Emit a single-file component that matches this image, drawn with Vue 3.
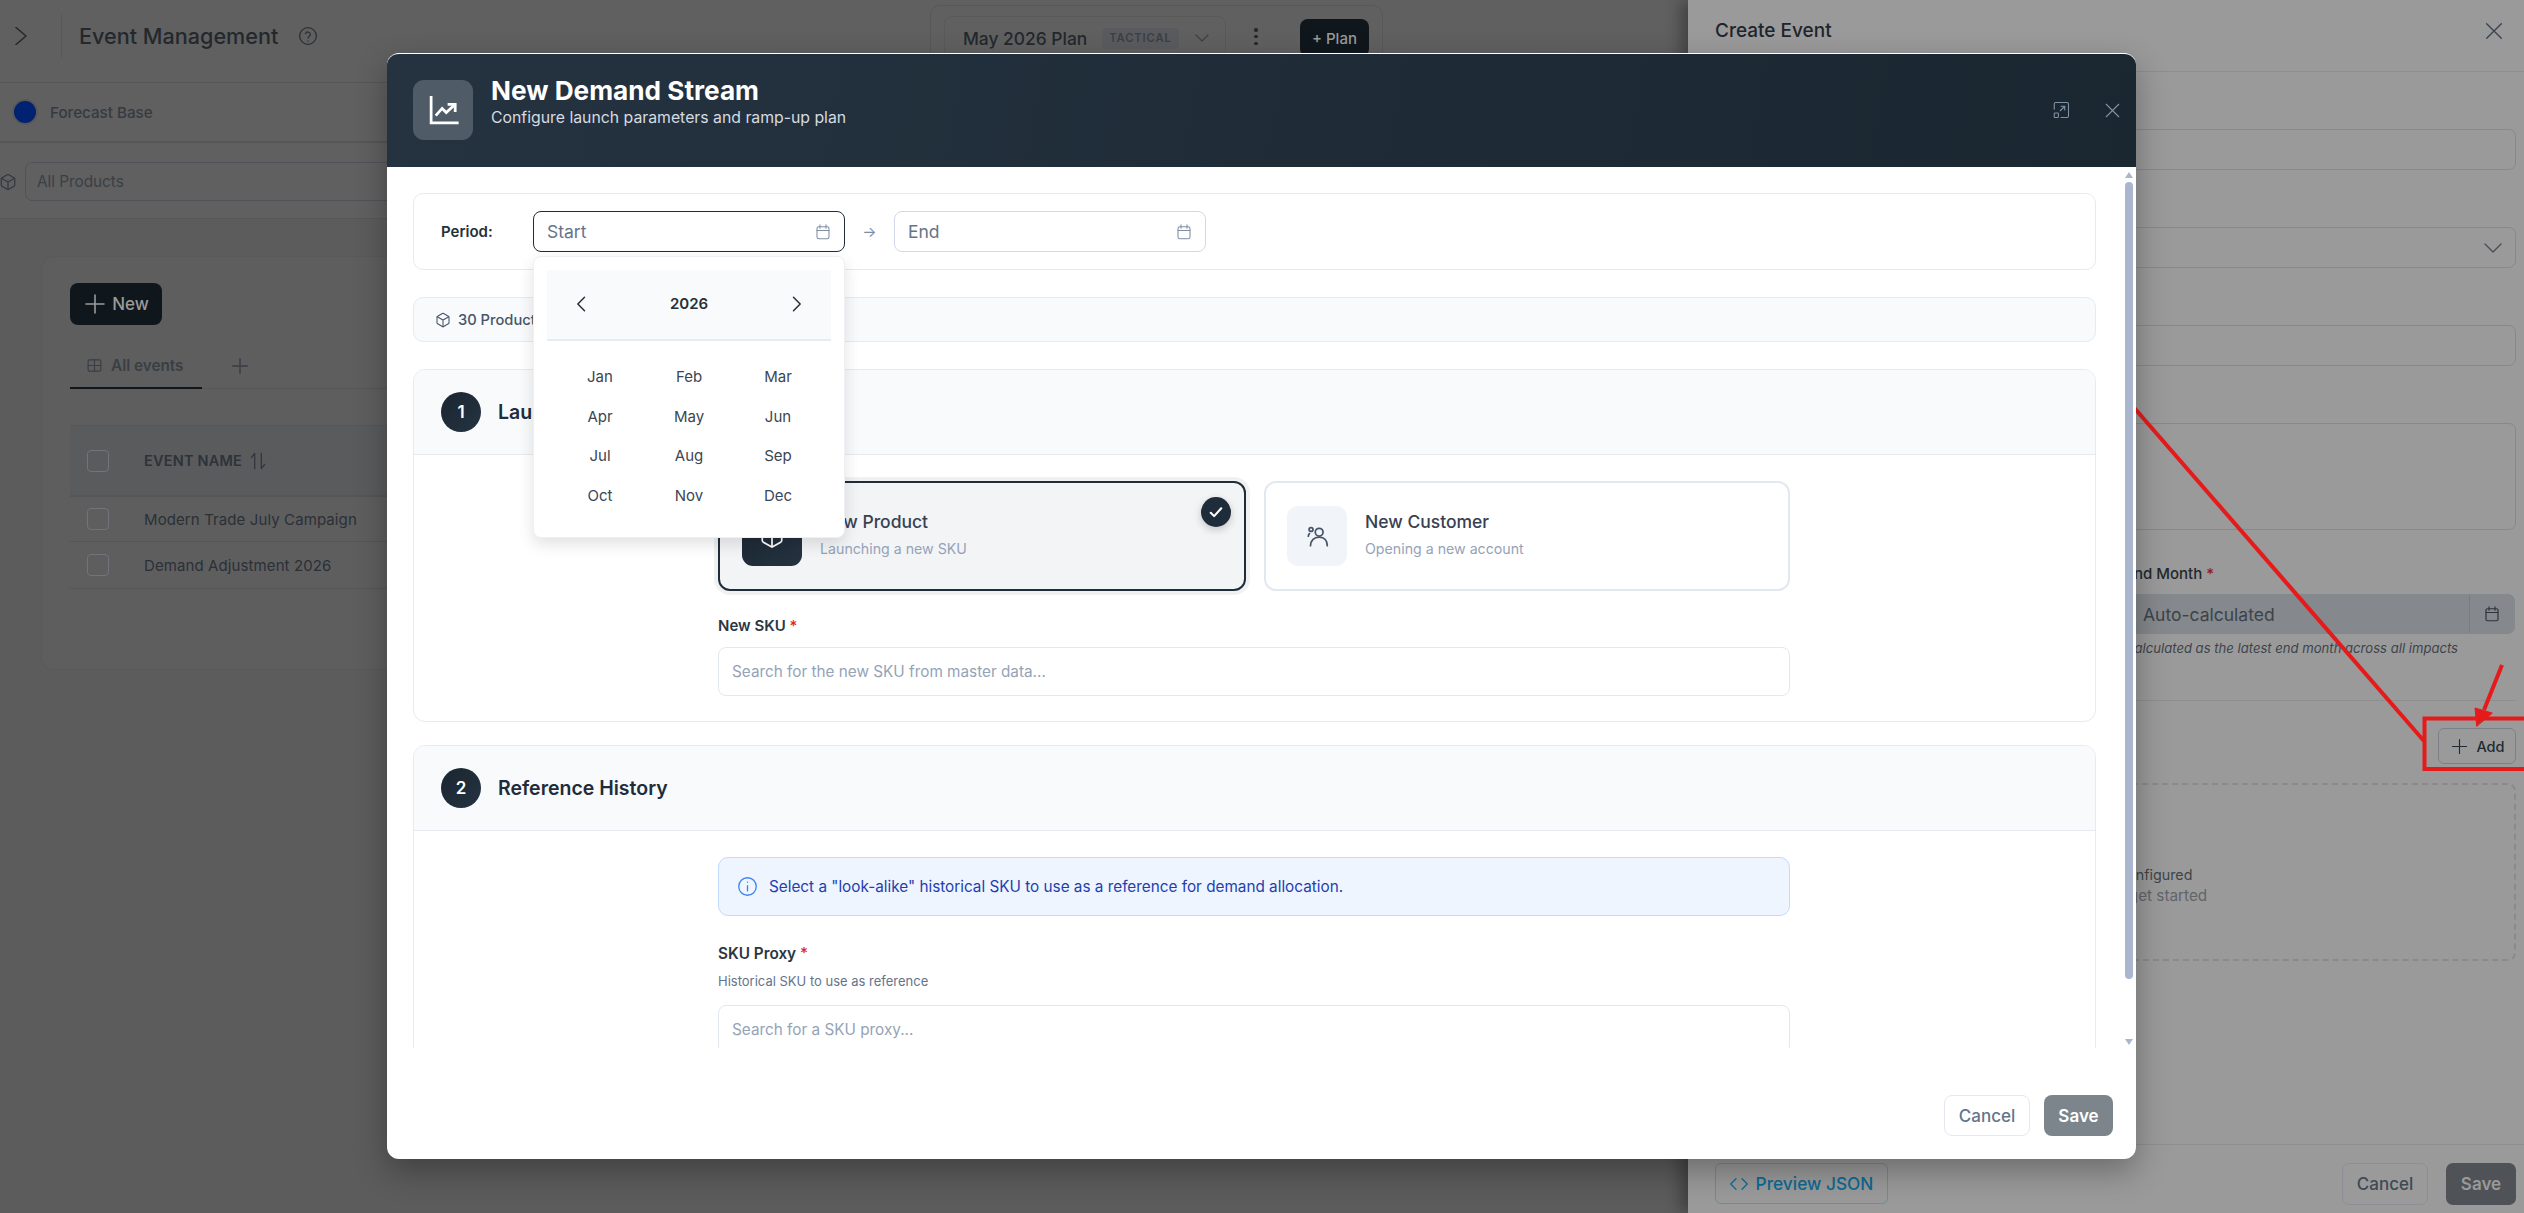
<script setup>
const months = ['Jan','Feb','Mar','Apr','May','Jun','Jul','Aug','Sep','Oct','Nov','Dec']
</script>

<template>
  <div class="app">
    <div class="page">
      <main class="main">
        <header class="topbar">
          <div class="top-left">
            <svg class="i-chev" viewBox="0 0 12 18"><path d="M1 .5L11 9 1 17.500"/></svg>
            <span class="top-div"></span>
            <h1>Event Management</h1>
            <svg class="i-help" viewBox="0 0 24 24"><circle cx="12" cy="12" r="10"/><path d="M9 9.2a3 3 0 0 1 5.800 1c0 2-2.800 2.400-2.800 4.300"/><path d="M12 17.800v.2"/></svg>
          </div>
          <div class="plan-wrap">
            <div class="plan-box">
              <span class="plan-name">May 2026 Plan</span>
              <span class="plan-badge">TACTICAL</span>
              <svg class="i-plan-chev" viewBox="0 0 24 24"><path d="M4 8l8 8 8-8"/></svg>
            </div>
            <span class="kebab"><i></i><i></i><i></i></span>
            <button class="plan-btn">+ Plan</button>
          </div>
        </header>
        <div class="row-base"><span class="dot"></span><span>Forecast Base</span></div>
        <div class="row-filter">
          <svg class="i-box" viewBox="0 0 24 24"><path d="M21 8a2 2 0 0 0-1-1.700l-7-4a2 2 0 0 0-2 0l-7 4A2 2 0 0 0 3 8v8a2 2 0 0 0 1 1.700l7 4a2 2 0 0 0 2 0l7-4a2 2 0 0 0 1-1.700z"/><path d="M3.300 7L12 12l8.700-5M12 22V12"/></svg>
          <div class="filter-input">All Products</div>
        </div>
        <section class="card">
          <button class="new-btn"><svg viewBox="0 0 24 24"><path d="M12 3v18M3 12h18"/></svg>New</button>
          <div class="tabs">
            <div class="tab">
              <svg class="i-table" viewBox="0 0 24 24"><rect x="3" y="4" width="18" height="16" rx="2"/><path d="M3 12h18M12 4v16"/></svg>
              All events
            </div>
            <svg class="i-tabplus" viewBox="0 0 24 24"><path d="M12 4v16M4 12h16"/></svg>
          </div>
          <div class="thead">
            <span class="check"></span>
            <span class="th">EVENT NAME</span>
            <svg class="i-sort" viewBox="0 0 24 24"><path d="M8 21V3L4 8M16 3v18l4-5"/></svg>
          </div>
          <div class="tr tr-1"><span class="check"></span><span>Modern Trade July Campaign</span></div>
          <div class="tr tr-2"><span class="check"></span><span>Demand Adjustment 2026</span></div>
        </section>
      </main>

      <aside class="drawer">
        <header class="dr-head">
          <span>Create Event</span>
          <svg viewBox="0 0 24 24"><path d="M4 4l16 16M20 4L4 20"/></svg>
        </header>
        <div class="dr-body">
          <div class="dr-field f1"><label>Event Name</label><div class="dr-input"></div></div>
          <div class="dr-field f2"><label>Event Type</label>
            <div class="dr-input select"><svg viewBox="0 0 24 24"><path d="M4 8l8 8 8-8"/></svg></div>
          </div>
          <div class="dr-field f3"><label>Owner</label><div class="dr-input"></div></div>
          <div class="dr-field f4"><label>Description</label><div class="dr-input area"></div></div>
          <div class="dr-months">
            <div class="dr-col"><label>Start Month <b>*</b></label><div class="dr-input"></div></div>
            <div class="dr-col">
              <label>End Month <b>*</b></label>
              <div class="dr-input auto">
                <span>Auto-calculated</span>
                <span class="addon"><svg viewBox="0 0 24 24"><rect x="4" y="5" width="16" height="16" rx="2"/><path d="M4 10h16M8 2.500V7M16 2.500V7"/></svg></span>
              </div>
              <p class="hint-it">Calculated as the latest end month across all impacts</p>
            </div>
          </div>
          <div class="dr-impacts">
            <div class="imp-head">
              <span>Impacts</span>
              <button class="add-btn"><svg viewBox="0 0 24 24"><path d="M12 4v16M4 12h16"/></svg>Add</button>
            </div>
            <div class="empty">
              <span class="e1">No impacts configured</span>
              <span class="e2">Click "Add" to get started</span>
            </div>
          </div>
        </div>
        <footer class="dr-foot">
          <button class="json-btn"><svg viewBox="0 0 24 24"><path d="M8 5l-7 7 7 7M16 5l7 7-7 7"/></svg>Preview JSON</button>
          <div class="dr-actions">
            <button class="dr-cancel">Cancel</button>
            <button class="dr-save">Save</button>
          </div>
        </footer>
      </aside>
    </div>

    <svg class="marks" viewBox="0 0 2524 1213">
      <path class="mark-line" d="M2130 403L2424 741"/>
      <path class="mark-line" d="M2502 665L2484 710"/>
      <polygon class="mark-head" points="2476.700,726 2475,708 2492,713"/>
      <rect class="mark-box" x="2424.500" y="718.500" width="102" height="50.500"/>
    </svg>

    <div class="modal">
      <header class="m-head">
        <div class="m-icon">
          <svg viewBox="0 0 24 24"><path d="M3 2.500V21h19"/><path d="M7 15l4-4.500 3 3L20 8"/><path d="M16 7.500h4.500V12"/></svg>
        </div>
        <div class="m-titles">
          <h2>New Demand Stream</h2>
          <p>Configure launch parameters and ramp-up plan</p>
        </div>
        <div class="m-tools">
          <svg class="i-expand" viewBox="0 0 24 24"><path d="M3 11V4a2 2 0 0 1 2-2h15a2 2 0 0 1 2 2v16a2 2 0 0 1-2 2h-8"/><rect x="3" y="16" width="5.500" height="6" rx="1"/><path d="M11 13l6-6M12 7h5v5"/></svg>
          <svg class="i-x" viewBox="0 0 24 24"><path d="M2 2l20 20M22 2L2 22"/></svg>
        </div>
      </header>

      <div class="m-body">
        <div class="period">
          <span class="period-label">Period:</span>
          <div class="date active">
            <span>Start</span>
            <svg viewBox="0 0 24 24"><rect x="4" y="5" width="16" height="16" rx="2.500"/><path d="M4 10h16M8 2.500V7M16 2.500V7"/></svg>
            <div class="popup">
              <div class="pop-head">
                <svg viewBox="0 0 24 24"><path d="M15 4l-8 8 8 8"/></svg>
                <span>2026</span>
                <svg viewBox="0 0 24 24"><path d="M9 4l8 8-8 8"/></svg>
              </div>
              <div class="pop-grid">
                <span v-for="m in months" :key="m">{{ m }}</span>
              </div>
            </div>
          </div>
          <span class="arrow">→</span>
          <div class="date">
            <span>End</span>
            <svg viewBox="0 0 24 24"><rect x="4" y="5" width="16" height="16" rx="2.500"/><path d="M4 10h16M8 2.500V7M16 2.500V7"/></svg>
          </div>
        </div>

        <div class="count">
          <svg viewBox="0 0 24 24"><path d="M21 8a2 2 0 0 0-1-1.700l-7-4a2 2 0 0 0-2 0l-7 4A2 2 0 0 0 3 8v8a2 2 0 0 0 1 1.700l7 4a2 2 0 0 0 2 0l7-4a2 2 0 0 0 1-1.700z"/><path d="M3.300 7L12 12l8.700-5M12 22V12"/></svg>
          <span>30 Products</span>
        </div>

        <section class="sec sec-1">
          <div class="sec-head"><span class="num">1</span><h3>Launch Type</h3></div>
          <div class="sec-body">
            <div class="choices">
              <div class="choice on">
                <div class="c-icon dark">
                  <svg viewBox="0 0 24 24"><path d="M21 8a2 2 0 0 0-1-1.700l-7-4a2 2 0 0 0-2 0l-7 4A2 2 0 0 0 3 8v8a2 2 0 0 0 1 1.700l7 4a2 2 0 0 0 2 0l7-4a2 2 0 0 0 1-1.700z"/><path d="M3.300 7L12 12l8.700-5M12 22V12"/></svg>
                </div>
                <div class="c-text"><strong>New Product</strong><small>Launching a new SKU</small></div>
                <span class="tick"><svg viewBox="0 0 24 24"><path d="M5 13l4.500 4.500L19 7"/></svg></span>
              </div>
              <div class="choice">
                <div class="c-icon">
                  <svg viewBox="0 0 24 24"><circle cx="14" cy="8.500" r="3.600"/><circle cx="6.500" cy="6" r="1.800"/><path d="M5 9.800c-.8.800-1 1.600-1 2.400M6 21c0-4.600 3-8 8-8s7.500 3.400 7.500 8"/></svg>
                </div>
                <div class="c-text"><strong>New Customer</strong><small>Opening a new account</small></div>
              </div>
            </div>
            <label class="f-label sku-label">New SKU <b>*</b></label>
            <div class="f-input">Search for the new SKU from master data...</div>
          </div>
        </section>

        <section class="sec sec-2">
          <div class="sec-head"><span class="num">2</span><h3>Reference History</h3></div>
          <div class="sec-body">
            <div class="info">
              <svg viewBox="0 0 24 24"><circle cx="12" cy="12" r="10"/><path d="M12 11v6M12 7v.2"/></svg>
              <span>Select a "look-alike" historical SKU to use as a reference for demand allocation.</span>
            </div>
            <label class="f-label proxy-label">SKU Proxy <b>*</b></label>
            <p class="f-hint">Historical SKU to use as reference</p>
            <div class="f-input">Search for a SKU proxy...</div>
          </div>
        </section>
        <div class="sb-up"></div>
        <div class="sb-thumb"></div>
        <div class="sb-down"></div>
      </div>

      <footer class="m-foot">
        <button class="m-cancel">Cancel</button>
        <button class="m-save">Save</button>
      </footer>
    </div>
  </div>
</template>

<style>
html, body { margin: 0; background: #5c5c5c; }
</style>

<style scoped>
* { box-sizing: border-box; }
svg { fill: none; stroke: currentColor; stroke-width: 1.600; stroke-linecap: round; stroke-linejoin: round; display: block; flex: none; }
button { font-family: inherit; }
h1, h2, h3, p { margin: 0; }
label { display: block; }
b { color: #8f2020; font-weight: 500; }

.app { position: relative; width: 2524px; height: 1213px; overflow: hidden; font-family: Inter, "Liberation Sans", sans-serif; }
.page { display: flex; width: 100%; height: 100%; }

/* underlying page */
.main { width: 1688px; height: 100%; background: #5c5c5c; color: #23282d; }
.topbar { height: 83px; background: #606060; border-bottom: 1px solid #565656; display: flex; }
.top-left { width: 930px; display: flex; align-items: center; padding-left: 15px; height: 72px; }
.i-chev { width: 12px; height: 18px; stroke-width: 1.500; color: #23282d; }
.top-div { width: 1px; height: 44px; background: #585858; margin: 0 17px 0 34px; }
h1 { font-size: 21.600px; font-weight: 500; white-space: nowrap; }
.i-help { width: 20px; height: 20px; margin-left: 20px; color: #2c3136; }
.plan-wrap { margin-top: 5px; width: 453px; height: 72px; border: 1px solid #585858; border-radius: 10px; padding: 10px 13px 0; display: flex; align-items: flex-start; background: #606060; }
.plan-box { width: 282px; height: 44px; border: 1px solid #595959; border-radius: 8px; display: flex; align-items: center; padding-left: 18px; flex: none; }
.plan-name { width: 123px; flex: none; font-size: 17.400px; font-weight: 500; white-space: nowrap; }
.plan-badge { margin-left: 16px; width: 77px; height: 21px; border-radius: 4px; background: #595b5e; color: #3b4046; font-size: 11.200px; font-weight: 600; letter-spacing: .9px; display: flex; align-items: center; justify-content: center; flex: none; }
.i-plan-chev { width: 18px; height: 18px; margin-left: 14px; color: #3b4046; }
.kebab { margin-left: 28px; width: 4px; height: 17px; margin-top: 12px; display: flex; flex-direction: column; justify-content: space-between; }
.kebab i { width: 3.500px; height: 3.500px; border-radius: 50%; background: #23282d; }
.plan-btn { margin-left: 42px; margin-top: 3px; width: 70px; height: 38px; border: 0; border-radius: 8px; background: #10171c; color: #9a9a9a; font-size: 15px; font-weight: 500; }

.row-base { height: 60px; background: #606060; border-bottom: 2px solid #565656; display: flex; align-items: center; padding-left: 14px; font-size: 15.200px; font-weight: 500; color: #353a40; }
.dot { width: 22px; height: 22px; border-radius: 50%; background: #012270; box-shadow: 0 0 0 2px rgba(0,0,0,.08); margin-right: 14px; }
.row-filter { height: 76px; background: #606060; border-bottom: 1px solid #575757; display: flex; align-items: center; padding-top: 2px; color: #33383e; }
.i-box { width: 18px; height: 18px; margin-right: 8px; margin-left: -1px; }
.filter-input { width: 400px; height: 39px; border: 1px solid #4f5358; border-radius: 7px; display: flex; align-items: center; padding-left: 11px; font-size: 15.300px; color: #3a3f45; }
.card { margin: 38px 0 0 42px; height: 412px; width: 1600px; background: #5e5e5e; border-radius: 12px; box-shadow: 0 0 0 1px #595959; padding: 26px 28px 0; }
.new-btn { width: 92px; height: 42px; border: 0; border-radius: 8px; background: #10171c; color: #9a9a9a; font-size: 17px; font-weight: 500; display: flex; align-items: center; justify-content: center; gap: 5px; }
.new-btn svg { width: 24px; height: 24px; }
.tabs { margin-top: 20px; height: 44px; border-bottom: 1px solid #565656; display: flex; align-items: center; position: relative; }
.tab { width: 132px; height: 44px; margin-bottom: -1px; border-bottom: 2px solid #10171c; padding-left: 16px; display: flex; align-items: center; gap: 8px; font-size: 15.300px; font-weight: 600; color: #393e44; padding-bottom: 2px; }
.i-table { width: 17px; height: 17px; }
.i-tabplus { width: 22px; height: 22px; margin-left: 27px; color: #393e44; margin-bottom: 2px; }
.thead { margin-top: 36px; height: 72px; background: #595b5d; border-top: 1px solid #565656; border-bottom: 2px solid #54565a; display: flex; align-items: center; padding-left: 17px; }
.check { width: 22px; height: 22px; border: 1px solid #71747a; border-radius: 4px; flex: none; }
.th { margin-left: 35px; font-size: 14.500px; font-weight: 600; letter-spacing: .2px; color: #2e3339; }
.i-sort { width: 20px; height: 20px; margin-left: 6px; color: #33383e; }
.tr { display: flex; align-items: center; padding-left: 17px; border-bottom: 1px solid #565656; font-size: 15px; color: #2b3037; letter-spacing: .1px; }
.tr span:last-child { margin-left: 35px; }
.tr-1 { height: 45px; }
.tr-2 { height: 47px; }

/* drawer */
.drawer { width: 836px; height: 100%; background: #9a9a9a; box-shadow: -8px 0 14px rgba(0,0,0,.3); color: #2b3037; display: flex; flex-direction: column; position: relative; }
.dr-head { height: 72px; border-bottom: 1px solid #8e8e8e; display: flex; align-items: center; justify-content: space-between; padding: 0 19px 10px 27px; font-size: 19px; font-weight: 500; color: #1f252b; }
.dr-head svg { width: 22px; height: 22px; color: #3a4450; stroke-width: 1.500; }
.dr-body { flex: 1; padding: 0 8px 0 27px; font-size: 14px; }
.dr-field { display: flex; flex-direction: column; }
.dr-field label { height: 57px; padding-top: 20px; }
.dr-input { height: 41px; border: 1px solid #84898f; border-radius: 7px; }
.select { display: flex; align-items: center; justify-content: flex-end; padding-right: 10px; }
.select svg { width: 24px; height: 24px; color: #474d55; stroke-width: 1.300; }
.area { height: 107px; }
.dr-months { display: grid; grid-template-columns: 390px 390px; gap: 20px; margin-top: 35px; }
.dr-col label { height: 29px; font-size: 15px; font-weight: 500; color: #23282d; line-height: 18px; }
.auto { height: 40px; background: #85888c; display: flex; align-items: center; justify-content: space-between; padding-left: 17px; font-size: 17.500px; color: #3c434b; overflow: hidden; }
.addon { width: 45px; height: 100%; border-left: 1px solid #797c82; display: flex; align-items: center; justify-content: center; }
.addon svg { width: 18px; height: 18px; color: #2f353c; }
.hint-it { margin-top: 5px; font-size: 13.100px; line-height: 18px; font-style: italic; color: #3e444b; white-space: nowrap; }
.dr-impacts { margin-top: 43px; border-top: 1px solid #8e8e8e; padding-top: 27px; }
.imp-head { display: flex; justify-content: space-between; align-items: center; height: 36px; }
.add-btn { width: 78px; height: 36px; border: 1px solid #7d8187; border-radius: 6px; background: transparent; display: flex; align-items: center; justify-content: center; gap: 6px; font-size: 14.500px; font-weight: 500; color: #1f2a33; padding-bottom: 1px; }
.add-btn svg { width: 21px; height: 21px; stroke-width: 1.300; }
.empty { margin-top: 19px; height: 178px; border: 2px dashed #8a8a8a; border-radius: 8px; display: flex; flex-direction: column; align-items: center; justify-content: center; gap: 3px; padding-top: 26px; }
.e1 { font-size: 14.300px; color: #3f444a; }
.e2 { font-size: 15.300px; color: #61656a; }
.dr-foot { height: 69px; border-top: 1px solid #8e8e8e; display: flex; justify-content: space-between; align-items: flex-start; padding: 18px 8px 0 27px; }
.json-btn { width: 173px; height: 41px; border: 1px solid #6d8c9c; border-radius: 6px; background: transparent; color: #0c6a93; font-size: 17.300px; font-weight: 500; display: flex; align-items: center; justify-content: center; gap: 8px; }
.json-btn svg { width: 18px; height: 18px; }
.dr-actions { display: flex; gap: 18px; }
.dr-cancel { width: 86px; height: 42px; border: 1px solid #8b8f95; border-radius: 7px; background: transparent; color: #3e4954; font-size: 17px; font-weight: 500; }
.dr-save { width: 70px; height: 42px; border: 0; border-radius: 7px; background: #4f5357; color: #9a9a9a; font-size: 17px; font-weight: 600; }

/* annotations */
.marks { position: absolute; inset: 0; width: 2524px; height: 1213px; }
.mark-line { stroke: #e51b1b; stroke-width: 4; stroke-linecap: butt; }
.mark-head { fill: #e51b1b; stroke: #e51b1b; stroke-width: 1; }
.mark-box { fill: none; stroke: #e51b1b; stroke-width: 4; stroke-linejoin: miter; }

/* modal */
.modal { position: absolute; left: 387px; top: 53px; width: 1749px; height: 1106px; border-radius: 12px; background: #fff; border-top: 1px solid #fff; overflow: hidden; box-shadow: 0 12px 32px rgba(0,0,0,.3); display: flex; flex-direction: column; color: #1f2d3a; }
.m-head { height: 113px; flex: none; background: linear-gradient(100deg, #253341, #1a2630); display: flex; padding: 26px 16px 0 26px; color: #fff; }
.m-icon { width: 60px; height: 60px; border-radius: 11px; background: #4f5c68; display: flex; align-items: center; justify-content: center; }
.m-icon svg { width: 33px; height: 33px; stroke-width: 2; stroke-linecap: square; stroke-linejoin: miter; }
.m-titles { margin-left: 18px; }
.m-titles h2 { font-size: 26.200px; font-weight: 700; line-height: 22px; }
.m-titles p { font-size: 15.800px; line-height: 22px; margin-top: 5px; color: #d5dbe1; }
.m-tools { margin-left: auto; display: flex; align-items: center; height: 60px; gap: 35px; color: #7f92a5; }
.i-expand { width: 18px; height: 18px; stroke-width: 1.500; }
.i-x { width: 15px; height: 15px; stroke-width: 1.800; }

.m-body { position: relative; height: 881px; flex: none; overflow: hidden; padding: 26px 40px 0 26px; display: flex; flex-direction: column; gap: 27px; }
.period { flex: none; height: 77px; border: 1px solid #e7e9ee; border-radius: 10px; display: flex; align-items: center; padding-left: 27px; font-size: 15px; }
.period-label { width: 92px; font-weight: 600; color: #252f3a; }
.date { position: relative; width: 312px; height: 41px; border: 1px solid #cfd8e6; border-radius: 8px; display: flex; align-items: center; justify-content: space-between; padding: 0 12px 0 13px; font-size: 17.500px; color: #64748b; }
.date > svg { width: 18px; height: 18px; color: #7f8ea3; stroke-width: 1.400; }
.date.active { border-color: #1f2d3a; }
.arrow { width: 49px; text-align: center; color: #7f8ea3; font-size: 15px; }
.popup { position: absolute; left: -1px; top: 44px; width: 312px; height: 282px; background: #fff; border: 1px solid #eef0f3; border-radius: 8px; box-shadow: 0 6px 16px rgba(0,0,0,.12); z-index: 5; padding: 13px 13px 0; color: #3b4654; }
.pop-head { height: 71px; background: #f8fafc; border-bottom: 2px solid #e8ebf0; display: flex; align-items: center; justify-content: space-between; padding: 0 25px 2px; font-size: 15px; font-weight: 600; color: #252f3a; }
.pop-head svg { width: 20px; height: 20px; stroke-width: 1.800; color: #252f3a; }
.pop-grid { display: grid; grid-template-columns: repeat(3, 89px); justify-content: center; grid-auto-rows: 39.500px; margin-top: 16px; font-size: 15px; text-align: center; align-items: center; }
.count { flex: none; height: 45px; background: #f8fafc; border: 1px solid #e6eaf1; border-radius: 10px; display: flex; align-items: center; padding-left: 21px; gap: 7px; font-size: 14.700px; font-weight: 500; color: #475569; }
.count svg { width: 16px; height: 16px; }

.sec { flex: none; border: 1px solid #e6eaf1; border-radius: 12px; overflow: hidden; }
.sec-1 { height: 353px; margin-bottom: -4px; }
.sec-2 { height: 400px; }
.sec-head { height: 85px; background: #f8fafc; border-bottom: 1px solid #e6eaf1; display: flex; align-items: center; padding-left: 27px; padding-bottom: 1px; }
.num { width: 40px; height: 40px; border-radius: 50%; background: linear-gradient(135deg, #1a2630, #253341); color: #fff; font-size: 17px; font-weight: 600; display: flex; align-items: center; justify-content: center; }
h3 { margin: 0 0 0 17px; font-size: 19.500px; font-weight: 600; color: #1f2d3a; }
.sec-body { width: 1072px; margin: 0 0 0 304px; padding-top: 26px; }
.choices { display: flex; gap: 18px; }
.choice { position: relative; flex: 1; height: 110px; border: 2px solid #e2e8f0; border-radius: 12px; display: flex; align-items: center; padding-left: 21px; }
.choice.on { flex: none; width: 528px; background: #f3f4f6; border-color: #1f2d3a; box-shadow: 0 0 0 4px #f0f1f3; padding-left: 22px; }
.c-icon { width: 60px; height: 60px; border-radius: 11px; background: #f1f5f9; color: #475569; display: flex; align-items: center; justify-content: center; }
.c-icon.dark { background: linear-gradient(135deg, #1a2630, #253341); color: #fff; }
.c-icon svg { width: 26px; height: 26px; }
.c-text { margin-left: 18px; display: flex; flex-direction: column; gap: 8px; margin-top: -2px; }
.c-text strong { font-size: 17.500px; line-height: 20px; font-weight: 500; color: #374151; }
.c-text small { font-size: 14.200px; line-height: 18px; color: #94a3b8; }
.tick { position: absolute; right: 13px; top: 14px; width: 30px; height: 30px; border-radius: 50%; background: #1f2d3a; color: #fff; box-shadow: 0 3px 8px rgba(0,0,0,.2); display: flex; align-items: center; justify-content: center; }
.tick svg { width: 18px; height: 18px; stroke-width: 2.800; }
.f-label { font-size: 15px; line-height: 18px; font-weight: 600; color: #2b3642; }
.f-label b { color: #dc2626; }
.sku-label { margin-top: 26px; margin-bottom: 12px; }
.proxy-label { margin-top: 29px; font-size: 15.300px; }
.f-hint { margin-top: 10px; font-size: 13px; line-height: 16px; color: #64748b; margin-bottom: 16px; }
.f-input { height: 49px; border: 1px solid #e2e8f0; border-radius: 8px; display: flex; align-items: center; padding-left: 13px; font-size: 15.300px; color: #94a3b8; }
.info { height: 59px; background: #eef5ff; border: 1px solid #bfdbfe; border-radius: 10px; display: flex; align-items: center; padding-left: 18px; gap: 11px; font-size: 15.300px; color: #1e40af; }
.info svg { width: 21px; height: 21px; color: #3b82f6; stroke-width: 1.500; }
.sb-thumb { position: absolute; right: 3px; top: 15px; width: 8px; height: 797px; border-radius: 4px; background: #a9b6cd; }
.sb-up, .sb-down { position: absolute; right: 3px; width: 0; height: 0; border-left: 4px solid transparent; border-right: 4px solid transparent; }
.sb-up { top: 5px; border-bottom: 6px solid #a9b6cd; }
.sb-down { top: 872px; border-top: 6px solid #a9b6cd; }
.m-foot { flex: 1; display: flex; justify-content: flex-end; align-items: flex-start; gap: 14px; padding: 47px 23px 0 0; }
.m-cancel { width: 86px; height: 41px; background: #fff; border: 1px solid #e5e8ee; border-radius: 8px; color: #64748b; font-size: 17px; font-weight: 500; }
.m-save { width: 69px; height: 41px; background: #7c858c; border: 0; border-radius: 8px; color: #fff; font-size: 17px; font-weight: 600; }
</style>
